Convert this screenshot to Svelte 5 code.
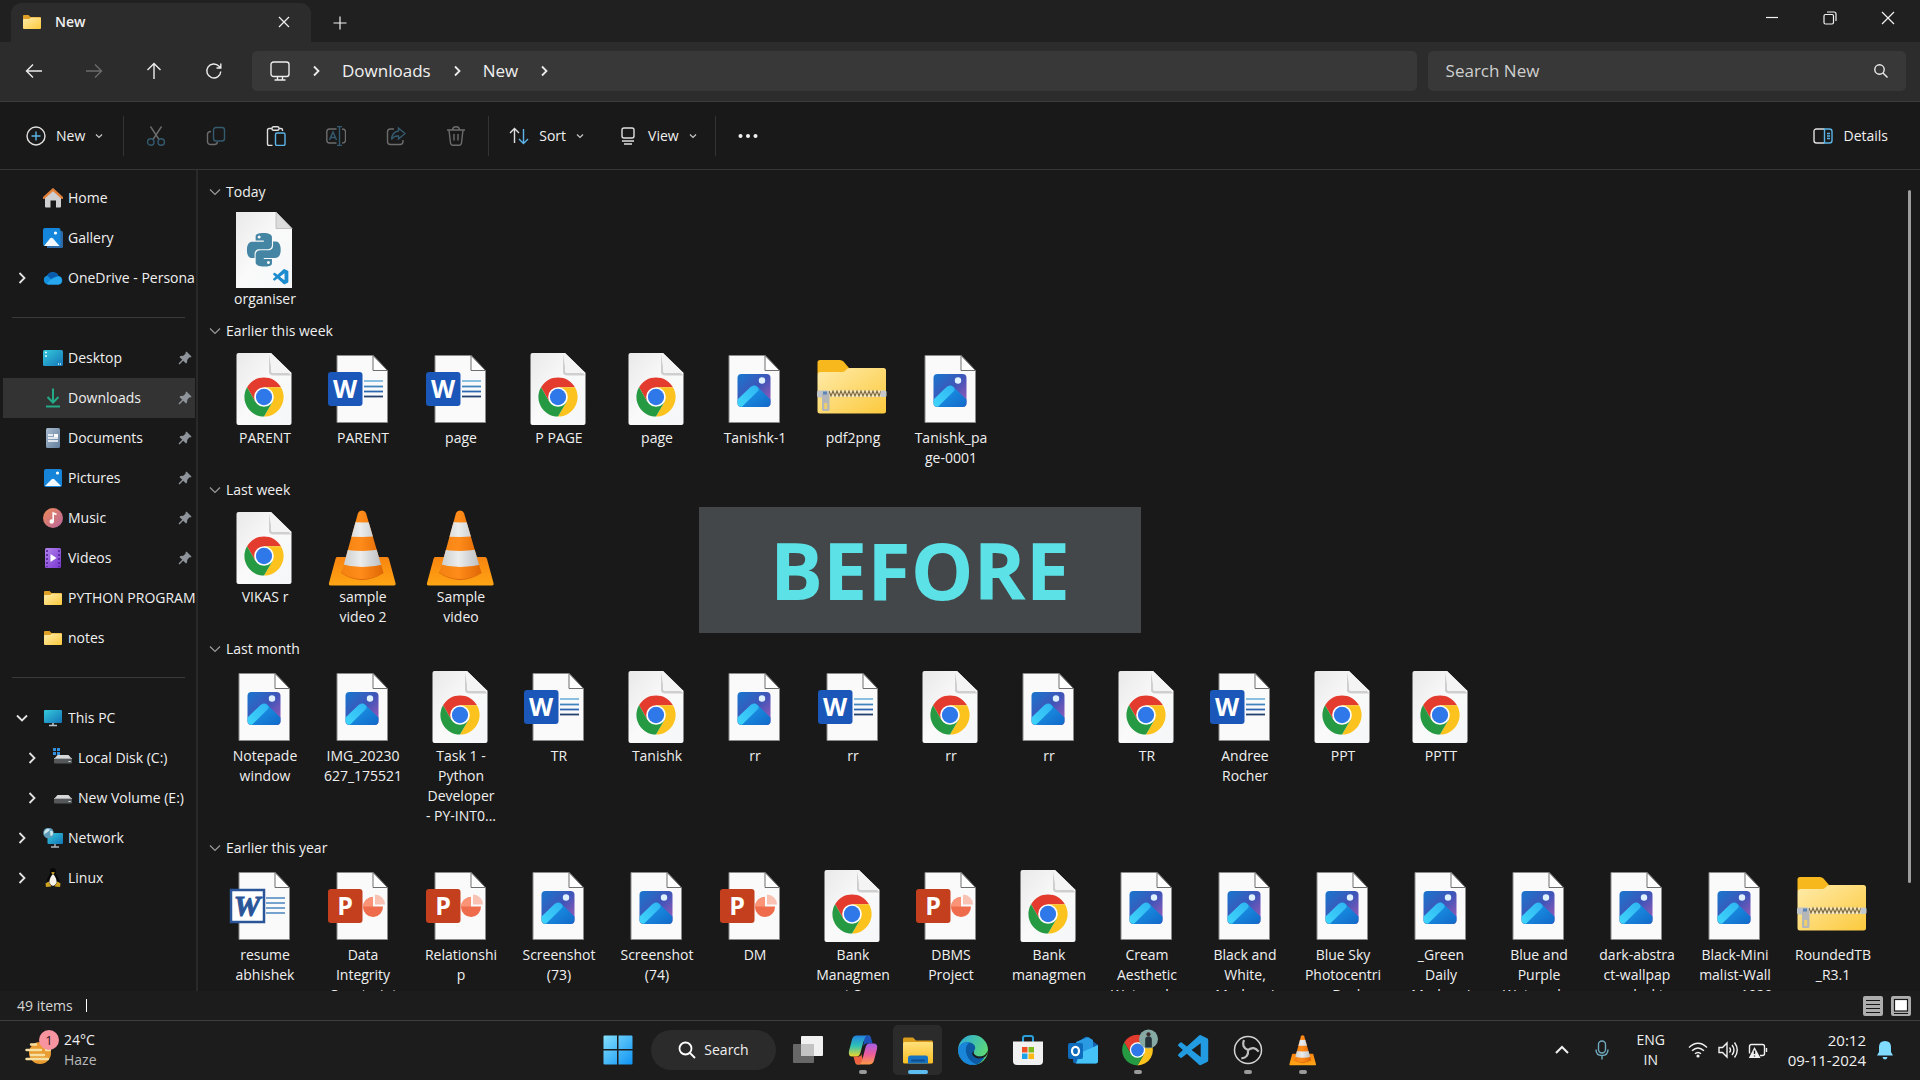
<script>
  const sidebar = [
    { icon: 'home', label: 'Home' },
    { icon: 'gallery', label: 'Gallery' },
    { icon: 'onedrive', label: 'OneDrive - Personal', chevron: 'right' },
    { divider: true },
    { icon: 'desktop', label: 'Desktop', pinned: true },
    { icon: 'downloads', label: 'Downloads', pinned: true, selected: true },
    { icon: 'documents', label: 'Documents', pinned: true },
    { icon: 'pictures', label: 'Pictures', pinned: true },
    { icon: 'music', label: 'Music', pinned: true },
    { icon: 'videos', label: 'Videos', pinned: true },
    { icon: 'folder', label: 'PYTHON PROGRAMS' },
    { icon: 'folder', label: 'notes' },
    { divider: true },
    { icon: 'pc', label: 'This PC', chevron: 'down' },
    { icon: 'windisk', label: 'Local Disk (C:)', chevron: 'right', nested: true },
    { icon: 'disk', label: 'New Volume (E:)', chevron: 'right', nested: true },
    { icon: 'network', label: 'Network', chevron: 'right' },
    { icon: 'linux', label: 'Linux', chevron: 'right' }
  ];

  const file = (type, ...lines) => ({ type, lines });

  const groups = [
    { title: 'Today', files: [file('python', 'organiser')] },
    {
      title: 'Earlier this week',
      files: [
        file('chrome', 'PARENT'),
        file('word', 'PARENT'),
        file('word', 'page'),
        file('chrome', 'P PAGE'),
        file('chrome', 'page'),
        file('image', 'Tanishk-1'),
        file('zip', 'pdf2png'),
        file('image', 'Tanishk_pa', 'ge-0001')
      ]
    },
    {
      title: 'Last week',
      files: [
        file('chrome', 'VIKAS r'),
        file('vlc', 'sample', 'video 2'),
        file('vlc', 'Sample', 'video')
      ]
    },
    {
      title: 'Last month',
      files: [
        file('image', 'Notepade', 'window'),
        file('image', 'IMG_20230', '627_175521'),
        file('chrome', 'Task 1 -', 'Python', 'Developer', '- PY-INT0...'),
        file('word', 'TR'),
        file('chrome', 'Tanishk'),
        file('image', 'rr'),
        file('word', 'rr'),
        file('chrome', 'rr'),
        file('image', 'rr'),
        file('chrome', 'TR'),
        file('word', 'Andree', 'Rocher'),
        file('chrome', 'PPT'),
        file('chrome', 'PPTT')
      ]
    },
    {
      title: 'Earlier this year',
      files: [
        file('oldword', 'resume', 'abhishek'),
        file('ppt', 'Data', 'Integrity', 'Constraint'),
        file('ppt', 'Relationshi', 'p'),
        file('image', 'Screenshot', '(73)'),
        file('image', 'Screenshot', '(74)'),
        file('ppt', 'DM'),
        file('chrome', 'Bank', 'Managmen', 't S'),
        file('ppt', 'DBMS', 'Project'),
        file('chrome', 'Bank', 'managmen'),
        file('image', 'Cream', 'Aesthetic', 'Watercolor'),
        file('image', 'Black and', 'White,', 'Modern I'),
        file('image', 'Blue Sky', 'Photocentri', 'c Desk'),
        file('image', '_Green', 'Daily', 'Modern I'),
        file('image', 'Blue and', 'Purple', 'Watercolor'),
        file('image', 'dark-abstra', 'ct-wallpap', 'er-deskt'),
        file('image', 'Black-Mini', 'malist-Wall', 'paper-1920'),
        file('zip', 'RoundedTB', '_R3.1')
      ]
    }
  ];

  const apps = [
    { id: 'taskview', name: 'Task view' },
    { id: 'copilot', name: 'Copilot', running: true },
    { id: 'explorer', name: 'File Explorer', active: true },
    { id: 'edge', name: 'Edge' },
    { id: 'store', name: 'Store' },
    { id: 'outlook', name: 'Outlook' },
    { id: 'chrome', name: 'Chrome', running: true },
    { id: 'vscode', name: 'VS Code' },
    { id: 'obs', name: 'OBS', running: true },
    { id: 'vlc', name: 'VLC', running: true }
  ];

  const pythonPath =
    'M14.25.18l.9.2.73.26.59.3.45.32.34.34.25.34.16.33.1.3.04.26.02.2-.01.13V8.5l-.05.63-.13.55-.21.46-.26.38-.3.31-.33.25-.35.19-.35.14-.33.1-.3.07-.26.04-.21.02H8.77l-.69.05-.59.14-.5.22-.41.27-.33.32-.27.35-.2.36-.15.37-.1.35-.07.32-.04.27-.02.21v3.06H3.17l-.21-.03-.28-.07-.32-.12-.35-.18-.36-.26-.36-.36-.35-.46-.32-.59-.28-.73-.21-.88-.14-1.05-.05-1.23.06-1.22.16-1.04.24-.87.32-.71.36-.57.4-.44.42-.33.42-.24.4-.16.36-.1.32-.05.24-.01h.16l.06.01h8.16v-.83H6.18l-.01-2.75-.02-.37.05-.34.11-.31.17-.28.25-.26.31-.23.38-.2.44-.18.51-.15.58-.12.64-.1.71-.06.77-.04.84-.02 1.27.05zm-6.3 1.98l-.23.33-.08.41.08.41.23.34.33.22.41.09.41-.09.33-.22.23-.34.08-.41-.08-.41-.23-.33-.33-.22-.41-.09-.41.09zm13.09 3.95l.28.06.32.12.35.18.36.27.36.35.35.47.32.59.28.73.21.88.14 1.04.05 1.23-.06 1.23-.16 1.04-.24.86-.32.71-.36.57-.4.45-.42.33-.42.24-.4.16-.36.09-.32.05-.24.02-.16-.01h-8.22v.82h5.84l.01 2.76.02.36-.05.34-.11.31-.17.29-.25.25-.31.24-.38.2-.44.17-.51.15-.58.13-.64.09-.71.07-.77.04-.84.01-1.27-.04-1.07-.14-.9-.2-.73-.25-.59-.3-.45-.33-.34-.34-.25-.34-.16-.33-.1-.3-.04-.25-.02-.2.01-.13v-5.34l.05-.64.13-.54.21-.46.26-.38.3-.32.33-.24.35-.2.35-.14.33-.1.3-.06.26-.04.21-.02.13-.01h5.84l.69-.05.59-.14.5-.21.41-.28.33-.32.27-.35.2-.36.15-.36.1-.35.07-.32.04-.28.02-.21V6.07h2.09l.14.01zm-6.47 14.25l-.23.33-.08.41.08.41.23.33.33.23.41.08.41-.08.33-.23.23-.33.08-.41-.08-.41-.23-.33-.33-.23-.41-.08-.41.08z';
  const vscodePath =
    'M23.15 2.587L18.21.21a1.494 1.494 0 0 0-1.705.29l-9.46 8.63-4.12-3.128a.999.999 0 0 0-1.276.057L.327 7.261A1 1 0 0 0 .326 8.74L3.899 12 .326 15.26a1 1 0 0 0 .001 1.479L1.65 17.94a.999.999 0 0 0 1.276.057l4.12-3.128 9.46 8.63a1.492 1.492 0 0 0 1.704.29l4.942-2.377A1.5 1.5 0 0 0 24 20.06V3.939a1.5 1.5 0 0 0-.85-1.352zm-5.146 14.861L10.826 12l7.178-5.448v10.896z';
</script>

{#snippet chromeLogo()}
  <path d="M-17.3-10A20 20 0 0 1 17.3-10L0-10 0 0-8.66 5Z" fill="#e33b2e" />
  <path d="M17.3-10A20 20 0 0 1 0 20L8.66 5 0 0 0-10Z" fill="#fcc31e" />
  <path d="M0 20A20 20 0 0 1-17.3-10L-8.66 5 0 0 8.66 5Z" fill="#269a43" />
  <circle r="10" fill="#fff" />
  <circle r="8.3" fill="#2f78ea" />
{/snippet}

{#snippet plainPage()}
  <path d="M14 9.5H50L64.5 24.5V76.5H14Z" fill="#fafafa" stroke="#8b8b8b" />
  <path d="M50 9.5V24.5H64.5Z" fill="#fff" stroke="#6e6e6e" />
{/snippet}

{#snippet cone()}
  <path d="M14 52H64Q65.500 52 66 54L72.500 78Q73 80.500 71 80.500H7.500Q5.500 80.500 6 78L12.500 54Q13 52 14 52Z" fill="url(#coneBase)" />
  <path d="M18 68Q39 82 60.500 68L58 62H21Z" fill="#d9650a" />
  <g clip-path="url(#coneClip)">
    <rect x="15" y="4" width="50" height="74" fill="url(#coneOrange)" />
    <path d="M15 16Q39 19 65 16V30Q39 34 15 30Z" fill="url(#coneWhite)" />
    <path d="M15 43Q39 49 65 43V58Q39 66 15 58Z" fill="url(#coneWhite)" />
  </g>
{/snippet}

{#snippet fileIcon(type)}
  <svg class="file-icon" viewBox="0 0 80 82" aria-hidden="true">
    {#if type === 'chrome'}
      <path d="M13.500 7H46L66.500 27V77Q66.500 79 64.500 79H13.500Q11.500 79 11.500 77V9Q11.500 7 13.500 7Z" fill="url(#paper)" />
      <path d="M44 8V27Q45 29.500 49 29.500H66.500L64 27H47Z" fill="#cfcfcf" />
      <path d="M46 7L66.500 27H48Q46 27 46 25Z" fill="#f4f4f4" />
      <g transform="translate(39 51) scale(.98)">{@render chromeLogo()}</g>
    {:else if type === 'python'}
      <path d="M11 5H51L67 21.500V81H11Z" fill="url(#paper)" />
      <path d="M51 5L67 21.500H51Z" fill="#dcdcdc" stroke="#b5b5b5" stroke-width=".8" />
      <path d={pythonPath} transform="translate(22 26) scale(1.4)" fill="#4485a3" />
      <path d={vscodePath} transform="translate(48 62) scale(.64)" fill="#1c8ccf" />
    {:else if type === 'image'}
      {@render plainPage()}
      <rect x="22.500" y="28" width="33" height="33" rx="4" fill="url(#photoSky)" />
      <path d="M25 60L36.500 41.500Q39.500 38 42.500 41L55.500 53.500V57Q55.500 61 51.500 61H26.500Z" fill="url(#photoHill)" />
      <path d="M22.500 53.500L35.500 41Q39 38 42.500 41Q45 43.500 42 46L27 60.800Q22.500 61 22.500 56.500Z" fill="url(#photoRidge)" />
      <circle cx="47" cy="34.500" r="3.200" fill="#dff1ff" />
    {:else if type === 'word'}
      {@render plainPage()}
      <path d="M41 35H60" stroke="#7fb9dd" stroke-width="1.800" />
      <path d="M41 40.500H60" stroke="#4184bd" stroke-width="1.800" />
      <path d="M41 45.500H60" stroke="#2b68b0" stroke-width="1.800" />
      <path d="M41 50.500H60" stroke="#23416e" stroke-width="1.800" />
      <rect x="5" y="26" width="34.500" height="34" rx="3" fill="#1b57b8" />
      <text x="22" y="52" class="badge-letter">W</text>
    {:else if type === 'oldword'}
      {@render plainPage()}
      <path d="M41 35H60M41 40H60M41 45H60M41 50H60" stroke="#4a86c0" stroke-width="1.600" />
      <rect x="6" y="27" width="33" height="32" fill="#fff" stroke="#2a5699" stroke-width="2.500" />
      <text x="22" y="53" class="badge-letter serif">W</text>
    {:else if type === 'ppt'}
      {@render plainPage()}
      <path d="M50 34V43.500H60A10 10 0 1 1 50 34Z" fill="#ee6c4b" />
      <path d="M50 34A10 10 0 0 0 40 43.500H50Z" fill="#fb9377" />
      <path d="M52 31.500A10 10 0 0 1 62 41.500H52Z" fill="#f9c2b3" />
      <rect x="5" y="26" width="34.500" height="34" rx="3" fill="#c43f1d" />
      <text x="22" y="52" class="badge-letter">P</text>
    {:else if type === 'vlc'}
      {@render cone()}
    {:else if type === 'zip'}
      <path d="M7 14H27Q29 14 30.500 15.500L36 22V28H4.500V16.500Q4.500 14 7 14Z" fill="#f6b81c" />
      <path d="M4.500 29Q4.500 26 8 26H29Q31 26 32.500 24.500L34 23Q35 22 37 22H70.500Q73 22 73 24.500V65Q73 67.500 70.500 67.500H7Q4.500 67.500 4.500 65Z" fill="url(#folderFront)" />
      <rect x="15" y="44.500" width="53" height="6.500" fill="#f5e7bb" />
      <path d="M16 45L18 50L20 45L22 50L24 45L26 50L28 45L30 50L32 45L34 50L36 45L38 50L40 45L42 50L44 45L46 50L48 45L50 50L52 45L54 50L56 45L58 50L60 45L62 50L64 45L66 50L68 45" fill="none" stroke="#7d6a42" stroke-width="1.200" />
      <rect x="4" y="44.500" width="12" height="7" rx="2" fill="#bfc4ca" />
      <rect x="67.500" y="44.500" width="6" height="6.500" rx="1.500" fill="#c5c9cd" />
      <rect x="9" y="47" width="7.500" height="18" rx="1.500" fill="#b4b6b8" />
      <rect x="11.200" y="57" width="3" height="6" fill="#efcf69" />
      <rect x="10" y="45.500" width="4" height="3" fill="#5c84b5" />
    {/if}
  </svg>
{/snippet}

{#snippet sideIcon(name)}
  <svg class="side-icon" viewBox="0 0 20 20" aria-hidden="true">
    {#if name === 'home'}
      <path d="M2 9L10 2L18 9V18.500Q18 19.500 17 19.500H13V12.500H7.500V19.500H3Q2 19.500 2 18.500Z" fill="#cfcfd2" />
      <path d="M.8 9.800L10 1.500L19.200 9.800" fill="none" stroke="#e2813a" stroke-width="2.400" stroke-linecap="round" />
    {:else if name === 'gallery'}
      <path d="M4 3H18.500Q20 3 20 4.500V18.500Q20 20 18.500 20H4Z" fill="#2d6ba8" />
      <rect width="17.500" height="18" rx="2" fill="#1487dc" />
      <path d="M1 18L7 10.500Q8.500 9 10 10.500L16.500 18Z" fill="#f1f9ff" />
      <circle cx="12.500" cy="5" r="1.600" fill="#fff" />
    {:else if name === 'onedrive'}
      <path d="M5 16.500A4.600 4.600 0 0 1 4.200 7.500A6.400 6.400 0 0 1 15.500 8A4.300 4.300 0 0 1 15.700 16.500Z" fill="#1490df" />
      <path d="M4.200 7.500A6.400 6.400 0 0 1 15.500 8L9 12Z" fill="#0a5cad" />
      <path d="M4 16Q8 9.500 15 8.300A4.300 4.300 0 0 1 15.700 16.500H5Z" fill="#27a8ee" />
    {:else if name === 'desktop'}
      <rect y="2" width="20" height="16" rx="1.500" fill="url(#desk)" />
      <path d="M2 4.500H4M2 8H4M15 16H16M17 16H18" stroke="#d4fbff" stroke-width="1.500" />
    {:else if name === 'downloads'}
      <path d="M10 .5V14M4.500 9L10 14.500L15.500 9M3 18.500H17" fill="none" stroke="#23ab87" stroke-width="2" />
    {:else if name === 'documents'}
      <rect x="3" width="14" height="20" rx="1.500" fill="url(#docs)" />
      <path d="M5 7H10M5 10H15M5 13H15" stroke="#fff" stroke-width="1.500" />
      <path d="M11 6H15V9H11Z" fill="#fff" />
    {:else if name === 'pictures'}
      <rect x="1" y="1" width="18" height="18" rx="2" fill="#1684d8" />
      <path d="M2 18L8.500 11.500Q10 10.200 11.500 11.500L18 18Z" fill="#f1f9ff" />
      <circle cx="14.500" cy="5" r="1.600" fill="#fff" />
    {:else if name === 'music'}
      <circle cx="10" cy="10" r="10" fill="url(#music)" />
      <path d="M10.200 13.500V5L13.500 6.500" fill="none" stroke="#fff" stroke-width="1.600" />
      <circle cx="8.700" cy="13.500" r="2.200" fill="#fff" />
    {:else if name === 'videos'}
      <rect x="2" width="16" height="20" rx="1.500" fill="url(#video)" />
      <path d="M4 2V19M16 2V19" stroke="#4f2290" stroke-width="1.600" stroke-dasharray="2 2" />
      <path d="M7.500 6L13.500 10L7.500 14Z" fill="#fff" />
    {:else if name === 'folder'}
      <path d="M1 4Q1 3 2 3H6.500L8.500 5H18Q19 5 19 6V9H1Z" fill="#dd9f26" />
      <path d="M1 8Q1 7 2 7H7L9 5.500H18Q19 5.500 19 6.500V16Q19 17 18 17H2Q1 17 1 16Z" fill="url(#folderFront)" />
    {:else if name === 'pc'}
      <rect x="1" y="2" width="18" height="13" rx="1" fill="url(#desk)" />
      <path d="M10 15V17M6 17.500H14" stroke="#b9c4cb" stroke-width="1.600" />
    {:else if name === 'windisk' || name === 'disk'}
      <path d="M4.500 7H15.500L19 11H1Z" fill="#d5d7d9" />
      <rect x="1" y="10.500" width="18" height="5" rx="1" fill="#55585b" />
      <path d="M1 10.500H19" stroke="#a8abad" />
      <path d="M15.500 13.500H17.500" stroke="#d7e8da" />
      {#if name === 'windisk'}
        <path d="M0 0H3V3H0ZM4 0H7V3H4ZM0 4H3V7H0ZM4 4H7V7H4Z" fill="#358ed6" />
      {/if}
    {:else if name === 'network'}
      <rect x="4.500" y="5" width="15.500" height="11" rx="1" fill="url(#desk)" />
      <path d="M12 16V19M8 19H16" stroke="#aeb8be" stroke-width="1.400" />
      <circle cx="5.500" cy="5" r="5.300" fill="#5d9cb8" />
      <path d="M1.500 3Q4 0 6 1T4 4.500T1 7ZM7 3Q10 2 10 5T7.500 8Z" fill="#cde6ea" />
    {:else if name === 'linux'}
      <path d="M10 0C6.500 0 6.800 3.500 7 6Q3.500 10.500 3.500 15L6 18.500H14L16.500 15Q16.500 10.500 13 6C13.200 3.500 13.500 0 10 0Z" fill="#080808" />
      <path d="M10 6Q6.500 9.500 6.300 14.500Q8 18 10 18T13.700 14.500Q13.500 9.500 10 6Z" fill="#f5f2e9" />
      <path d="M8 4.500L10 6.800L12 4.500Q10 3.400 8 4.500ZM2.500 15.500L5.500 13.500L8.500 18.500L3 19ZM17.500 15.500L14.500 13.500L11.500 18.500L17 19Z" fill="#cda321" />
    {/if}
  </svg>
{/snippet}

{#snippet appIcon(name)}
  <svg class="app-icon" viewBox="0 0 32 32" aria-hidden="true">
    {#if name === 'start'}
      <path d="M1.500 2.500Q1.500 1.500 2.500 1.500H15V15H1.500ZM16.500 1.500H29.500Q30.500 1.500 30.500 2.500V15H16.500ZM1.500 16.500H15V30.500H2.500Q1.500 30.500 1.500 29.500ZM16.500 16.500H30.500V29.500Q30.500 30.500 29.500 30.500H16.500Z" fill="url(#winLogo)" />
    {:else if name === 'taskview'}
      <rect x="9" y="2" width="22" height="20" rx="1" fill="#f1f1f1" />
      <rect x="1" y="10" width="21" height="19" rx="1" fill="#7b7b7b" opacity=".8" />
      <path d="M9 10H22V22H9Z" fill="#c3c3c3" />
    {:else if name === 'copilot'}
      <path d="M22 1.500H10Q6 1.500 5 5.500L2 17Q.8 22.500 5.500 22.500H9.500Q12.500 22.500 13.500 18.500L16 9Q17 5 20 5H24Q23.500 1.500 22 1.500Z" fill="url(#copA)" />
      <path d="M20 1.500Q23.500 1.500 24.500 5.500L25.500 9.500H20Q17 9.500 16 13L17 7Q18 2 20 1.500Z" fill="#1d52b9" />
      <path d="M10 30.500H22Q26 30.500 27 26.500L30 15Q31.200 9.500 26.500 9.500H22.500Q19.500 9.500 18.500 13.500L16 23Q15 27 12 27H8Q8.500 30.500 10 30.500Z" fill="url(#copB)" />
      <path d="M12 30.500Q8.500 30.500 7.500 26.500L6.500 22.500H12Q14 22 14.500 20L15.500 25Q14 30 12 30.500Z" fill="#ee6242" />
    {:else if name === 'explorer'}
      <path d="M1 5Q1 3.500 2.500 3.500H11L14 6.500H29.500Q31 6.500 31 8V12H1Z" fill="#d99b1c" />
      <path d="M1 9.500Q1 8 2.500 8H29.500Q31 8 31 9.500V28Q31 29.500 29.500 29.500H2.500Q1 29.500 1 28Z" fill="url(#folderApp)" />
      <path d="M6 29.500V24Q6 21.500 8.500 21.500H23.500Q26 21.500 26 24V29.500Z" fill="#1673c4" />
      <path d="M10 26.500H22" stroke="#0c4f8d" stroke-width="2" stroke-linecap="round" />
    {:else if name === 'edge'}
      <circle cx="16" cy="16" r="15" fill="url(#edgeA)" />
      <path d="M1.300 18C1 10 8 7 13 8.500C19 10 19 15 17 17C15.500 20 19 23 24 22.500Q27 22 28.500 21Q25 31 15 31Q4 30 1.300 18Z" fill="#0c59a4" />
      <path d="M1.300 18C1 10 8 7 13 8.500Q7 12 9.500 20Q12 28 20 30.500Q5 33 1.300 18Z" fill="#1a86d9" />
      <path d="M17 17C15.500 20 19 23 24 22.500Q29 21.500 31 16Q31 20 28.500 22.500Q20 27 15.500 21Q14.500 18 17 17Z" fill="#1d1d1d" />
    {:else if name === 'store'}
      <path d="M11 8V4Q11 2 13 2H19Q21 2 21 4V8" fill="none" stroke="#2b9fdb" stroke-width="2" />
      <path d="M1 7.500H31V27Q31 31 27 31H5Q1 31 1 27Z" fill="#f1f1f1" />
      <path d="M10 13H15.500V18.500H10Z" fill="#ee5026" />
      <path d="M16.500 13H22V18.500H16.500Z" fill="#7dba1e" />
      <path d="M10 19.500H15.500V25H10Z" fill="#1ba2e8" />
      <path d="M16.500 19.500H22V25H16.500Z" fill="#fdb813" />
    {:else if name === 'outlook'}
      <path d="M6 11L19 2.500L31 11V27Q31 29.500 28.500 29.500H9Q6 29.500 6 27Z" fill="#1265b5" />
      <path d="M9 8L21 3L26 6V18H9Z" fill="#2a9ae2" />
      <path d="M13 19L31 11V27Q31 29.500 28.500 29.500H9Z" fill="#45c2f6" />
      <rect x="1" y="9" width="15" height="16" rx="2" fill="#0f6cbd" />
      <ellipse cx="8.500" cy="17" rx="3.500" ry="4.200" fill="none" stroke="#fff" stroke-width="2.200" />
    {:else if name === 'chrome'}
      <g transform="translate(15.500 16) scale(.77)">{@render chromeLogo()}</g>
    {:else if name === 'vscode'}
      <path d={vscodePath} transform="translate(1 1) scale(1.260)" fill="#229be0" />
    {:else if name === 'obs'}
      <circle cx="16" cy="16" r="13.500" fill="#171717" stroke="#d4d4d4" stroke-width="1.500" />
      <g fill="none" stroke="#bdbdbd" stroke-width="2.200">
        <path d="M16 16Q9 13 12 6" />
        <path d="M16 16Q9 13 12 6" transform="rotate(120 16 16)" />
        <path d="M16 16Q9 13 12 6" transform="rotate(240 16 16)" />
      </g>
    {:else if name === 'vlc'}
      <g transform="translate(0 -1) scale(.4)">{@render cone()}</g>
    {/if}
  </svg>
{/snippet}

{#snippet chevDown()}
  <svg class="chev" viewBox="0 0 8 8" aria-hidden="true"><path d="M1 2.500L4 5.500L7 2.500" /></svg>
{/snippet}

{#snippet crumbChev()}
  <svg class="crumb-chev" viewBox="0 0 14 14" aria-hidden="true"><path d="M5 2.500L9.500 7L5 11.500" /></svg>
{/snippet}

<svg class="defs" aria-hidden="true">
  <defs>
    <linearGradient id="paper" x2="1" y2="1"><stop stop-color="#e9e9e9" /><stop offset=".5" stop-color="#fafafa" /><stop offset="1" stop-color="#f4f6f8" /></linearGradient>
    <linearGradient id="photoSky" x2="1" y2="1"><stop stop-color="#1877cf" /><stop offset=".5" stop-color="#3f55b8" /><stop offset="1" stop-color="#a75ab8" /></linearGradient>
    <linearGradient id="photoHill" x2="1" y2="1"><stop stop-color="#1aa0ee" /><stop offset="1" stop-color="#1368c8" /></linearGradient>
    <linearGradient id="photoRidge" x1="1" x2="0" y2="1"><stop stop-color="#2fb4f3" /><stop offset="1" stop-color="#3fd6fa" /></linearGradient>
    <linearGradient id="folderFront" x2="1" y2="1"><stop stop-color="#ffebaa" /><stop offset="1" stop-color="#fbc93c" /></linearGradient>
    <linearGradient id="folderApp" x2="0" y2="1"><stop stop-color="#ffe07a" /><stop offset="1" stop-color="#f8bd22" /></linearGradient>
    <linearGradient id="coneBase" x2="0" y2="1"><stop stop-color="#f8840f" /><stop offset="1" stop-color="#ffa514" /></linearGradient>
    <linearGradient id="coneOrange"><stop stop-color="#f08010" /><stop offset=".45" stop-color="#ff8c1a" /><stop offset="1" stop-color="#d96000" /></linearGradient>
    <linearGradient id="coneWhite"><stop stop-color="#c2c4c4" /><stop offset=".45" stop-color="#ececec" /><stop offset="1" stop-color="#adb1b3" /></linearGradient>
    <linearGradient id="desk" x2="1" y2="1"><stop stop-color="#35c9dc" /><stop offset="1" stop-color="#1475b8" /></linearGradient>
    <linearGradient id="docs" x2="1" y2="1"><stop stop-color="#a9bccf" /><stop offset="1" stop-color="#627d9d" /></linearGradient>
    <linearGradient id="music" x2="1" y2="1"><stop stop-color="#ee8a55" /><stop offset="1" stop-color="#b865a0" /></linearGradient>
    <linearGradient id="video" x2="1" y2="1"><stop stop-color="#b184ee" /><stop offset="1" stop-color="#7a35d0" /></linearGradient>
    <linearGradient id="winLogo" x2="1" y2="1"><stop stop-color="#84e0fd" /><stop offset="1" stop-color="#0f93f4" /></linearGradient>
    <linearGradient id="copA" x2="0" y2="1"><stop stop-color="#2283e0" /><stop offset=".5" stop-color="#2fc2b5" /><stop offset="1" stop-color="#efd62b" /></linearGradient>
    <linearGradient id="copB" x2="0" y2="1"><stop stop-color="#a35fe8" /><stop offset=".5" stop-color="#ec5c9c" /><stop offset="1" stop-color="#fb9a45" /></linearGradient>
    <linearGradient id="edgeA" x2="1" y2=".6"><stop stop-color="#2aa7e0" /><stop offset="1" stop-color="#5fdc70" /></linearGradient>
    <clipPath id="coneClip"><path d="M35 8Q36 5.500 39 5.500T43 8L60.500 68Q39 80 18.500 68Z" /></clipPath>
  </defs>
</svg>

<div class="screen">
  <header class="titlebar">
    <div class="tab">
      {@render sideIcon('folder')}
      <strong>New</strong>
      <button class="tab-close" aria-label="Close tab">
        <svg viewBox="0 0 12 12"><path d="M1 1L11 11M11 1L1 11" /></svg>
      </button>
    </div>
    <button class="tab-add" aria-label="New tab">
      <svg viewBox="0 0 14 14"><path d="M7 .5V13.500M.5 7H13.500" /></svg>
    </button>
    <div class="window-controls">
      <button aria-label="Minimize"><svg viewBox="0 0 14 14"><path d="M1 6.500H13" /></svg></button>
      <button aria-label="Restore">
        <svg viewBox="0 0 14 14"><rect x="1" y="3.500" width="9.500" height="9.500" rx="1.500" /><path d="M4 1H11Q13 1 13 3V10" /></svg>
      </button>
      <button aria-label="Close"><svg viewBox="0 0 14 14"><path d="M1 1L13 13M13 1L1 13" /></svg></button>
    </div>
  </header>

  <nav class="navbar" aria-label="Location">
    <div class="history">
      <button aria-label="Back"><svg viewBox="0 0 18 18"><path d="M17 9H1.500M8 2.500L1.500 9L8 15.500" /></svg></button>
      <button aria-label="Forward" disabled><svg viewBox="0 0 18 18"><path d="M1 9H16.500M10 2.500L16.500 9L10 15.500" /></svg></button>
      <button aria-label="Up"><svg viewBox="0 0 18 18"><path d="M9 17V1.500M2.500 8L9 1.500L15.500 8" /></svg></button>
      <button aria-label="Refresh"><svg viewBox="0 0 18 18"><path d="M15.800 9.500A7 7 0 1 1 14 4.300L15.500 6M15.800 1.500V6H11.500" /></svg></button>
    </div>
    <div class="address">
      <svg class="address-pc" viewBox="0 0 20 20" aria-hidden="true"><rect x="1" y="1" width="18" height="14.500" rx="2.500" /><path d="M7.500 15.500V18.500M12.500 15.500V18.500M4.500 19H15.500" /></svg>
      {@render crumbChev()}
      <button>Downloads</button>
      {@render crumbChev()}
      <button>New</button>
      {@render crumbChev()}
    </div>
    <label class="search">
      <input type="text" placeholder="Search New" aria-label="Search New" />
      <svg viewBox="0 0 14 14" aria-hidden="true"><circle cx="5.500" cy="5.500" r="4.700" /><path d="M9 9L13.500 13.500" /></svg>
    </label>
  </nav>

  <div class="toolbar" role="toolbar" aria-label="Commands">
    <button class="text-tool new-tool">
      <svg viewBox="0 0 20 20"><circle cx="10" cy="10" r="9" /><path class="blue" d="M10 5.500V14.500M5.500 10H14.500" /></svg>
      New {@render chevDown()}
    </button>
    <span class="rule"></span>
    <button class="tool dim" aria-label="Cut">
      <svg viewBox="0 0 20 20"><path d="M4.500 .5L13 13.500M15.500 .5L7 13.500" /><circle class="blue" cx="4.800" cy="16" r="3.200" /><circle class="blue" cx="15.200" cy="16" r="3.200" /></svg>
    </button>
    <button class="tool dim" aria-label="Copy">
      <svg viewBox="0 0 20 20"><path d="M5 5.500Q1.500 5.500 1.500 8.500V15.500Q1.500 18.500 5 18.500H8.500Q11 18.500 11.500 16" /><rect class="blue" x="7.500" y="1.500" width="11" height="13.500" rx="2.500" /></svg>
    </button>
    <button class="tool" aria-label="Paste">
      <svg viewBox="0 0 20 20"><path d="M6 2.500H3Q1.500 2.500 1.500 4V18Q1.500 19.500 3 19.500H6.500M13 2.500H15Q16.500 2.500 16.500 4V5" /><rect x="6" y=".8" width="7" height="3.500" rx="1.500" /><rect class="blue" x="9.500" y="7" width="9.500" height="12.500" rx="1.500" /></svg>
    </button>
    <button class="tool dim" aria-label="Rename">
      <svg viewBox="0 0 20 20"><path d="M10.500 3H3.500Q.8 3 .8 6V14Q.8 17 3.500 17H10.500M16 3Q19.500 3 19.500 6V14Q19.500 17 16 17" /><path class="blue" d="M3.500 14L7 6L10.500 14M4.500 11.500H9.500M13.500 .5V19.500M11 .5H16M11 19.500H16" /></svg>
    </button>
    <button class="tool dim" aria-label="Share">
      <svg viewBox="0 0 20 20"><path d="M8 3H4.500Q1.500 3 1.500 6V15.500Q1.500 18.500 4.500 18.500H14Q17 18.500 17 15.500V14" /><path class="blue" d="M12.500 2L19 7.500L12.500 13V10Q8 9.500 5.500 13.500Q6 6 12.500 5Z" /></svg>
    </button>
    <button class="tool dim" aria-label="Delete">
      <svg viewBox="0 0 20 20"><path d="M1 4H19M6.500 4Q6.500 .8 10 .8T13.500 4M3 4L4.500 17Q4.800 19.200 7 19.200H13Q15.200 19.200 15.500 17L17 4M8 8V14.500M12 8V14.500" /></svg>
    </button>
    <span class="rule"></span>
    <button class="text-tool">
      <svg viewBox="0 0 20 20"><path d="M5.500 17V2.500M1 7L5.500 2.500L10 7" /><path class="blue" d="M14.500 3V17.500M10 13L14.500 17.500L19 13" /></svg>
      Sort {@render chevDown()}
    </button>
    <button class="text-tool">
      <svg viewBox="0 0 20 20"><rect x="4" y="2" width="12" height="10" rx="2" /><path d="M4 15H16M6 18H14" /></svg>
      View {@render chevDown()}
    </button>
    <span class="rule"></span>
    <button class="tool" aria-label="More">
      <svg viewBox="0 0 20 20"><g class="dots"><circle cx="2.500" cy="10" r="2" /><circle cx="10" cy="10" r="2" /><circle cx="17.500" cy="10" r="2" /></g></svg>
    </button>
    <button class="text-tool details">
      <svg viewBox="0 0 20 20"><path d="M11.500 3H3.500Q1 3 1 5.500V14.500Q1 17 3.500 17H11.500" /><path class="blue" d="M11.500 3H16.500Q19 3 19 5.500V14.500Q19 17 16.500 17H11.500ZM14 7.500H17M14 10H17M14 12.500H17" /></svg>
      Details
    </button>
  </div>

  <div class="body">
    <nav class="sidebar" aria-label="Folders">
      {#each sidebar as item}
        {#if item.divider}
          <hr />
        {:else}
          <a href="#{item.icon}" class="side-row" class:selected={item.selected} class:nested={item.nested}>
            <span class="side-chev">
              {#if item.chevron === 'right'}
                <svg viewBox="0 0 14 14"><path d="M4.500 2L9.500 7L4.500 12" /></svg>
              {:else if item.chevron === 'down'}
                <svg viewBox="0 0 14 14"><path d="M2 4.500L7 9.500L12 4.500" /></svg>
              {/if}
            </span>
            {@render sideIcon(item.icon)}
            <span class="side-label">{item.label}</span>
            {#if item.pinned}
              <svg class="pin" viewBox="0 0 14 14" aria-hidden="true"><path d="M8.500 .5L13.500 5.500L12.500 6.500L11.500 6.300L9.300 8.700L9 11.500L8 12.500L5.200 9.800L1.500 13.500L.5 12.500L4.200 8.800L1.500 6L2.500 5L5.300 4.700L7.700 2.500L7.500 1.500Z" /></svg>
            {/if}
          </a>
        {/if}
      {/each}
    </nav>

    <main class="content">
      <div class="groups">
        {#each groups as group}
          <section>
            <h2>
              <button class="group-head">
                <svg viewBox="0 0 12 12" aria-hidden="true"><path d="M1 3.500L6 8.500L11 3.500" /></svg>
                {group.title}
              </button>
            </h2>
            <div class="files">
              {#each group.files as f}
                <button class="file">
                  {@render fileIcon(f.type)}
                  {#each f.lines as line}<span>{line}</span>{/each}
                </button>
              {/each}
            </div>
          </section>
        {/each}
      </div>
      <div class="scroll-gutter"><div class="thumb"></div></div>
      <div class="banner">BEFORE</div>
    </main>
  </div>

  <footer class="status">
    <span>49 items</span>
    <span class="caret"></span>
    <div class="view-switch">
      <button aria-label="List view"><svg viewBox="0 0 20 20"><path d="M3 4.500H17M3 8.500H17M3 12.500H17M3 16.500H17" /></svg></button>
      <button aria-label="Large icons view"><svg viewBox="0 0 20 20"><rect x="3.500" y="3.500" width="13" height="11.500" fill="#fff" /><path d="M3 17.500H17" /></svg></button>
    </div>
  </footer>

  <div class="taskbar">
    <button class="weather">
      <svg viewBox="0 0 36 36" aria-hidden="true">
        <circle cx="16" cy="23" r="11" fill="#e99c31" />
        <path d="M7 14.500H12M2.500 20H17M22 20H26M7 25H20M2.500 29H24" stroke="#f6dfa0" stroke-width="2.400" stroke-linecap="round" />
        <circle cx="25" cy="10" r="10" fill="#f893a0" />
        <text x="25" y="15">1</text>
      </svg>
      <span class="two-line"><span>24°C</span><span class="muted">Haze</span></span>
    </button>

    <div class="apps">
      <button class="app" aria-label="Start">{@render appIcon('start')}</button>
      <button class="task-search">
        <svg viewBox="0 0 18 18" aria-hidden="true"><circle cx="7.500" cy="7.500" r="6" /><path d="M12 12L17 17" /></svg>
        Search
      </button>
      {#each apps as app}
        <button class="app" class:active={app.active} class:running={app.running} aria-label={app.name}>
          {@render appIcon(app.id)}
          {#if app.id === 'chrome'}
            <svg class="avatar" viewBox="0 0 20 20"><circle cx="10" cy="10" r="10" fill="#87a9a4" /><path d="M6.500 19V10Q7 7 10 7T13.500 10V19Z" fill="#26343a" /><circle cx="10" cy="5" r="2.200" fill="#3a2b28" /></svg>
          {/if}
        </button>
      {/each}
    </div>

    <div class="tray">
      <button aria-label="Show hidden icons" class="tray-icon"><svg viewBox="0 0 20 20"><path class="thick" d="M4 13L10 7L16 13" /></svg></button>
      <button aria-label="Microphone" class="tray-icon mic"><svg viewBox="0 0 20 20"><rect x="6.500" y="1" width="7" height="12" rx="3.500" /><path d="M4 9.500Q4 15.500 10 15.500T16 9.500M10 15.500V19.500" /></svg></button>
      <button class="two-line lang"><span>ENG</span><span>IN</span></button>
      <button class="quick" aria-label="Network, volume and battery">
        <svg viewBox="0 0 20 20"><path d="M1 7.500Q10 -1 19 7.500M4 10.800Q10 5 16 10.800M7 13.800Q10 11 13 13.800" /><circle class="solid" cx="10" cy="16" r="1.600" /></svg>
        <svg viewBox="0 0 20 20"><path d="M1 7.500H4.500L9 3V17L4.500 12.500H1ZM11.500 7.500Q13.500 10 11.500 12.500M14 5Q18 10 14 15M16.500 2.500Q22 10 16.500 17.500" /></svg>
        <svg viewBox="0 0 20 20"><path d="M1.500 13.500V6.500Q1.500 4.500 3.500 4.500H14.500Q16.500 4.500 16.500 6.500V13.500Q16.500 15.500 14.500 15.500H12M18.500 8V12" /><path class="solid" d="M6.500 7L12.500 18H.8Z" /><path class="warn" d="M6.500 10.500V14M6.500 15.500V16.500" /></svg>
      </button>
      <button class="two-line clock"><span>20:12</span><span>09-11-2024</span></button>
      <button class="bell" aria-label="Notifications"><svg viewBox="0 0 18 20"><path d="M9 1Q15 1 15 7V12L17 15.500H1L3 12V7Q3 1 9 1ZM6.500 17H11.500Q11 19.500 9 19.500T6.500 17Z" /></svg></button>
    </div>
  </div>
</div>

<style>
  :global(body) {
    margin: 0;
    background: #191919;
  }

  .screen {
    display: flex;
    flex-direction: column;
    height: 100vh;
    overflow: hidden;
    background: #191919;
    color: #f0f0f0;
    font: 14px/20px 'Open Sans', 'Noto Sans', sans-serif;
  }

  .defs {
    position: absolute;
    width: 0;
    height: 0;
  }

  button {
    margin: 0;
    padding: 0;
    border: 0;
    background: none;
    color: inherit;
    font: inherit;
  }

  svg {
    flex: none;
    display: block;
  }

  /* Title bar */
  .titlebar {
    display: flex;
    height: 42px;
    background: #202020;
  }

  .titlebar svg:not(.side-icon) {
    width: 14px;
    height: 14px;
    fill: none;
    stroke: #f2f2f2;
    stroke-width: 1.2;
  }

  .tab {
    display: flex;
    align-items: center;
    gap: 13px;
    width: 300px;
    box-sizing: border-box;
    margin: 3px 0 0 11px;
    padding: 0 13px 1px 11px;
    border-radius: 10px 10px 0 0;
    background: #2c2c2c;
  }

  .tab strong {
    flex: 1;
    font-weight: 600;
  }

  .tab-close {
    padding: 8px;
  }

  .titlebar .tab-close svg {
    width: 12px;
    height: 12px;
  }

  .tab-add {
    display: grid;
    place-items: center;
    width: 58px;
    padding-top: 3px;
  }

  .window-controls {
    display: flex;
    margin-left: auto;
    padding-right: 3px;
  }

  .window-controls button {
    display: grid;
    place-items: center;
    width: 58px;
    height: 36px;
  }

  /* Navigation bar */
  .navbar {
    display: flex;
    align-items: center;
    height: 58px;
    padding: 0 14px 1px 0;
    border-bottom: 1px solid #3d3d3d;
    background: #2c2c2c;
    font-size: 17px;
  }

  .navbar svg {
    fill: none;
    stroke: #ececec;
    stroke-width: 1.4;
  }

  .history {
    display: flex;
    padding: 0 8px 0 4px;
  }

  .history button {
    display: grid;
    place-items: center;
    width: 60px;
    height: 40px;
  }

  .history svg {
    width: 18px;
    height: 18px;
  }

  .history button:disabled svg {
    stroke: #6b6b6b;
  }

  .address {
    display: flex;
    flex: 1;
    align-items: center;
    gap: 19px;
    height: 40px;
    padding-left: 18px;
    border-radius: 5px;
    background: #383838;
  }

  .address-pc {
    width: 20px;
    height: 20px;
  }

  .crumb-chev {
    width: 14px;
    height: 14px;
  }

  .navbar .crumb-chev {
    stroke-width: 1.8;
  }

  .search {
    display: flex;
    align-items: center;
    width: 25.1%;
    height: 40px;
    box-sizing: border-box;
    margin-left: 11px;
    padding: 0 18px;
    border-radius: 5px;
    background: #383838;
  }

  .search input {
    flex: 1;
    min-width: 0;
    padding: 0;
    border: 0;
    outline: 0;
    background: none;
    color: #f0f0f0;
    font: inherit;
  }

  .search input::placeholder {
    color: #cfcfcf;
    opacity: 1;
  }

  .search svg {
    width: 14px;
    height: 14px;
  }

  /* Command bar */
  .toolbar {
    display: flex;
    align-items: center;
    height: 67px;
    border-bottom: 1px solid #353535;
  }

  .toolbar svg:not(.chev) {
    width: 20px;
    height: 20px;
    fill: none;
    stroke: #e0e0e0;
    stroke-width: 1.4;
  }

  .toolbar svg .blue {
    stroke: #5bb5e8;
  }

  .toolbar .dots {
    fill: #f2f2f2;
    stroke: none;
  }

  .dim {
    opacity: 0.42;
  }

  .chev {
    width: 8px;
    height: 8px;
    fill: none;
    stroke: #c8c8c8;
    stroke-width: 1.2;
  }

  .rule {
    width: 1px;
    height: 40px;
    margin: 0 2px;
    background: #333;
  }

  .tool {
    display: grid;
    place-items: center;
    width: 60px;
    height: 40px;
  }

  .text-tool {
    display: flex;
    align-items: center;
    gap: 10px;
    padding: 0 16px 0 18px;
    height: 40px;
  }

  .new-tool {
    padding: 0 18px 0 26px;
  }

  .details {
    margin-left: auto;
    padding-right: 32px;
  }

  /* Sidebar */
  .body {
    display: flex;
    flex: 1;
    min-height: 0;
  }

  .sidebar {
    flex: none;
    width: 196px;
    padding-top: 8px;
    border-right: 2px solid #292929;
    overflow: hidden;
  }

  .sidebar hr {
    height: 1px;
    margin: 19px 11px 20px 12px;
    border: 0;
    background: #3a3a3a;
  }

  .side-row {
    display: flex;
    align-items: center;
    gap: 5px;
    height: 40px;
    box-sizing: border-box;
    margin: 0 1px 0 3px;
    color: inherit;
    text-decoration: none;
  }

  .side-row.nested {
    padding-left: 10px;
  }

  .side-row.selected {
    background: #333;
  }

  .side-chev {
    display: flex;
    flex: none;
    justify-content: flex-end;
    width: 26px;
    padding-right: 9px;
  }

  .side-chev svg {
    width: 14px;
    height: 14px;
    fill: none;
    stroke: #e4e4e4;
    stroke-width: 1.8;
  }

  .side-icon {
    width: 20px;
    height: 20px;
  }

  .side-label {
    flex: 1;
    min-width: 0;
    overflow: hidden;
    white-space: nowrap;
  }

  .pin {
    width: 14px;
    height: 14px;
    margin-right: 3px;
    fill: #8e9499;
  }

  /* File area */
  .content {
    position: relative;
    display: flex;
    flex: 1;
    min-width: 0;
  }

  .groups {
    flex: 1;
    min-width: 0;
    padding-top: 7px;
    overflow: hidden;
  }

  section {
    padding-bottom: 7px;
  }

  h2 {
    margin: 0;
    font: inherit;
  }

  .group-head {
    display: flex;
    align-items: center;
    gap: 5px;
    height: 30px;
    padding-left: 11px;
  }

  .group-head svg {
    width: 12px;
    height: 12px;
    fill: none;
    stroke: #9a9a9a;
    stroke-width: 1.2;
  }

  .files {
    display: grid;
    grid-template-columns: repeat(auto-fill, 98px);
    padding-left: 18px;
  }

  .file {
    display: flex;
    flex-direction: column;
    align-items: center;
  }

  .file span {
    white-space: nowrap;
  }

  .file-icon {
    width: 80px;
    height: 82px;
  }

  .badge-letter {
    fill: #fff;
    font: 700 25px 'Open Sans', sans-serif;
    text-anchor: middle;
  }

  .badge-letter.serif {
    fill: #2a5699;
    stroke: #2a5699;
    font: italic 700 30px 'Liberation Serif', serif;
  }

  .scroll-gutter {
    display: flex;
    justify-content: center;
    width: 22px;
    padding: 20px 0 108px;
  }

  .thumb {
    width: 3px;
    border-radius: 2px;
    background: #9d9d9d;
  }

  .banner {
    position: absolute;
    top: 337px;
    left: 501px;
    width: 442px;
    background: #44474a;
    color: #5ce1e6;
    font-size: 79px;
    font-weight: 700;
    line-height: 126px;
    text-align: center;
  }

  /* Status bar */
  .status {
    display: flex;
    align-items: center;
    gap: 13px;
    height: 29px;
    padding: 0 9px 0 17px;
    border-bottom: 1px solid #3f3f3f;
    background: #1c1c1c;
    color: #d6d6d6;
  }

  .caret {
    width: 1px;
    height: 13px;
    background: #fff;
  }

  .view-switch {
    display: flex;
    gap: 8px;
    margin-left: auto;
  }

  .view-switch svg {
    width: 20px;
    height: 20px;
    border-radius: 2px;
    background: #adadad;
    fill: none;
    stroke: #161616;
    stroke-width: 1.2;
  }

  /* Taskbar */
  .taskbar {
    display: grid;
    grid-template-columns: 1fr auto 1fr;
    align-items: center;
    height: 58px;
    padding-bottom: 1px;
    background: #1c1c1c;
  }

  .two-line {
    display: flex;
    flex-direction: column;
  }

  .muted {
    color: #b9b9b9;
  }

  .weather {
    display: flex;
    gap: 4px;
    justify-self: start;
    padding-left: 24px;
    text-align: left;
  }

  .weather svg {
    width: 36px;
    height: 36px;
  }

  .weather text {
    fill: #33161b;
    font-size: 13px;
    text-anchor: middle;
  }

  .apps {
    display: flex;
    align-items: center;
  }

  .app {
    position: relative;
    display: grid;
    place-items: center;
    width: 49px;
    height: 50px;
    margin: 0 3px;
    border-radius: 5px;
  }

  .app.active {
    background: #2b2b2b;
  }

  .app-icon {
    width: 32px;
    height: 32px;
  }

  .app.running::after,
  .app.active::after {
    position: absolute;
    bottom: 1px;
    left: 50%;
    width: 8px;
    height: 4px;
    border-radius: 2px;
    background: #9a9a9a;
    content: '';
    translate: -50%;
  }

  .app.active::after {
    width: 20px;
    background: #5ebdf0;
  }

  .avatar {
    position: absolute;
    top: 4px;
    right: 4px;
    width: 19px;
    height: 20px;
  }

  .task-search {
    display: flex;
    align-items: center;
    justify-content: center;
    gap: 8px;
    width: 125px;
    height: 40px;
    margin: 0 4px 0 6px;
    border-radius: 20px;
    background: #2b2b2b;
  }

  .task-search svg {
    width: 18px;
    height: 18px;
    fill: none;
    stroke: #fff;
    stroke-width: 1.8;
  }

  .tray {
    display: flex;
    align-items: center;
    justify-content: flex-end;
    padding-right: 26px;
  }

  .tray svg {
    width: 20px;
    height: 20px;
    fill: none;
    stroke: #f0f0f0;
    stroke-width: 1.4;
  }

  .tray .thick {
    stroke-width: 2;
  }

  .tray .solid {
    fill: #f0f0f0;
    stroke: none;
  }

  .tray .warn {
    stroke: #1c1c1c;
  }

  .tray-icon {
    display: grid;
    place-items: center;
    width: 40px;
  }

  .tray .mic svg {
    stroke: #6fa9bd;
  }

  .lang {
    align-items: center;
    width: 58px;
  }

  .quick {
    display: flex;
    gap: 10px;
    padding: 0 20px 0 8px;
  }

  .clock {
    align-items: flex-end;
    font-size: 15px;
  }

  .bell {
    padding-left: 10px;
  }

  .tray .bell svg {
    width: 18px;
    fill: #7fdcff;
    stroke: none;
  }
</style>
